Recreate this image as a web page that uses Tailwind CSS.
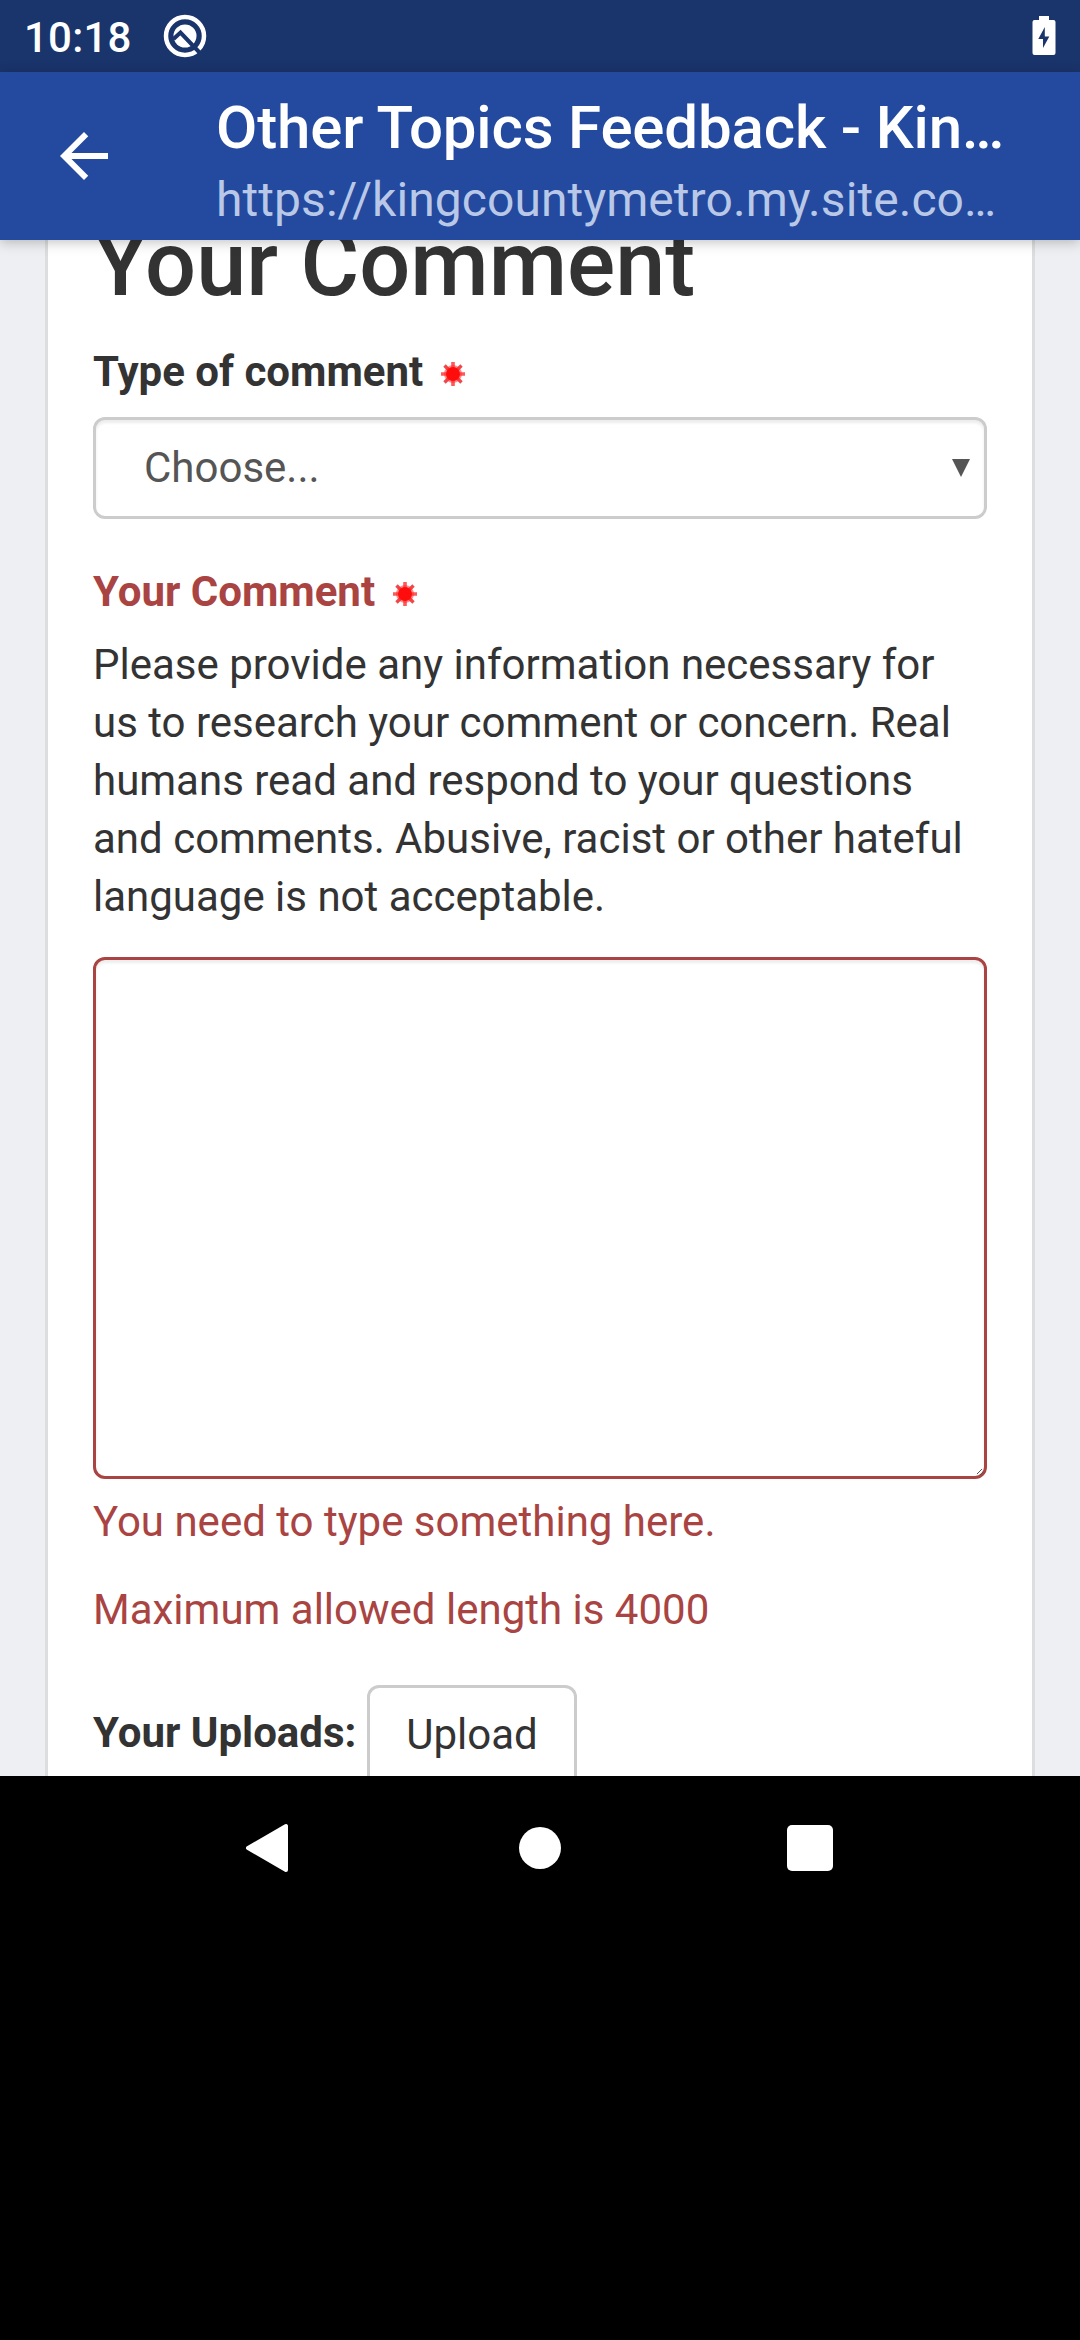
<!DOCTYPE html>
<html lang="en">
<head>
<meta charset="utf-8">
<title>Other Topics Feedback</title>
<script src="https://cdn.jsdelivr.net/npm/@tailwindcss/browser@4"></script>
</head>
<body class="bg-black w-[1080px] h-[2340px] overflow-hidden font-[Roboto,sans-serif] flex flex-col">
  <svg class="hidden">
    <symbol id="required" viewBox="0 0 24 24">
      <path stroke="#ff5a5a" stroke-width="3.600" d="M12 0v24M0 12h24"/>
      <path stroke="#f04848" stroke-width="3.400" d="M3.500 3.500l17 17M20.500 3.500l-17 17"/>
      <circle cx="12" cy="12" r="9" fill="#ff3030" opacity=".55"/>
      <circle cx="12" cy="12" r="7" fill="#ff0c0c"/>
    </symbol>
  </svg>

  <!-- Status bar -->
  <div class="h-[72px] shrink-0 bg-[#1a346c] flex items-center justify-between px-[24px] text-white">
    <div class="flex items-center">
      <span class="text-[42px] leading-[72px] font-medium tracking-[0.2px] w-[108px] whitespace-nowrap pt-[3px]">10:18</span>
      <svg class="w-[44px] h-[44px] ml-[31px]" viewBox="0 0 44 44" fill="none">
        <circle cx="22" cy="22" r="19" stroke="#fff" stroke-width="4.500"/>
        <circle cx="22" cy="22" r="11.500" fill="#fff"/>
        <path d="M10.500 25l7-6.500 19 20" stroke="#1a346c" stroke-width="4"/>
      </svg>
    </div>
    <svg class="w-[24px] h-[40px]" viewBox="0 0 24 40">
      <path fill="#fff" d="M7 0h10v4h4.500a2 2 0 0 1 2 2v31a2 2 0 0 1-2 2h-19a2 2 0 0 1-2-2V6a2 2 0 0 1 2-2H7z"/>
      <path fill="#1a346c" d="M12.800 11v9.500H17.300L11 32v-9H6.300z"/>
    </svg>
  </div>

  <!-- Browser toolbar -->
  <header class="h-[168px] shrink-0 bg-[#234a9f] flex relative z-10 shadow-[0_2px_12px_rgba(0,0,0,0.25)]">
    <div class="w-[216px] flex items-center pl-[60px]">
      <svg class="w-[48px] h-[48px]" viewBox="4 4 16 16" fill="#fff"><path d="M20 11H7.830l5.590-5.590L12 4l-8 8 8 8 1.410-1.410L7.830 13H20v-2z"/></svg>
    </div>
    <div class="w-[800px] flex flex-col pt-[20px] whitespace-nowrap">
      <div class="text-[60px] leading-[72px] font-medium tracking-[-0.16px] text-white">Other Topics Feedback - Kin…</div>
      <div class="text-[48px] leading-[72px] tracking-[0.07px] text-[#bac8e8]">https://kingcountymetro.my.site.co…</div>
    </div>
  </header>

  <!-- Page -->
  <main class="h-[1536px] shrink-0 bg-[#eeeff2] overflow-hidden px-[45px]">
    <div class="h-[1700px] bg-white border-x-[3px] border-[#dcddde] px-[45px] text-[42px] leading-[58px] text-[#333]">
      <h2 class="-mt-[25px] text-[90px] leading-[99px] font-medium whitespace-nowrap">Your Comment</h2>
      <div class="mt-[29px] flex items-center font-bold">Type of comment<svg class="w-[24px] h-[24px] ml-[18px] mt-[4px]"><use href="#required"/></svg></div>
      <div class="mt-[16px] h-[102px] border-[3px] border-[#ccc] rounded-[12px] shadow-[inset_0_3px_3px_rgba(0,0,0,0.075)] flex items-center justify-between pl-[48px] pr-[14px] text-[#555]">
        <span>Choose...</span>
        <svg class="w-[18px] h-[18px]" viewBox="0 0 18 18"><path fill="#555" d="M0 0h18L9 18z"/></svg>
      </div>
      <div class="mt-[44px] flex items-center font-bold text-[#a94442]">Your Comment<svg class="w-[24px] h-[24px] ml-[18px] mt-[4px]"><use href="#required"/></svg></div>
      <p class="mt-[15px] whitespace-nowrap">Please provide any information necessary for<br>us to research your comment or concern. Real<br>humans read and respond to your questions<br>and comments. Abusive, racist or other hateful<br>language is not acceptable.</p>
      <div class="mt-[31px] h-[522px] border-[3px] border-[#a94442] rounded-[12px] shadow-[inset_0_3px_3px_rgba(0,0,0,0.075)] flex items-end justify-end">
        <svg class="w-[7px] h-[7px]" viewBox="0 0 7 7"><path d="M0 5l5-5M3 6l3-3" stroke="#555" stroke-width="1"/></svg>
      </div>
      <p class="mt-[14px] text-[#a94442]">You need to type something here.</p>
      <p class="mt-[30px] text-[#a94442]">Maximum allowed length is 4000</p>
      <div class="mt-[46px] flex items-start">
        <span class="mt-[19px] w-[274px] font-bold whitespace-nowrap">Your Uploads:</span>
        <div class="w-[210px] h-[102px] border-[3px] border-[#ccc] rounded-[12px] pt-[18px] text-center">Upload</div>
      </div>
    </div>
  </main>

  <!-- Navigation bar -->
  <nav class="h-[144px] shrink-0 grid grid-cols-[245px_44px_230px_42px_226px_46px] items-center">
    <svg class="col-start-2 w-[44px] h-[50px]" viewBox="0 0 44 50"><path fill="#fff" stroke="#fff" stroke-width="4" stroke-linejoin="round" d="M3 25L41 3v44z"/></svg>
    <div class="col-start-4 w-[42px] h-[42px] rounded-full bg-white"></div>
    <div class="col-start-6 w-[46px] h-[46px] rounded-[5px] bg-white"></div>
  </nav>
</body>
</html>
